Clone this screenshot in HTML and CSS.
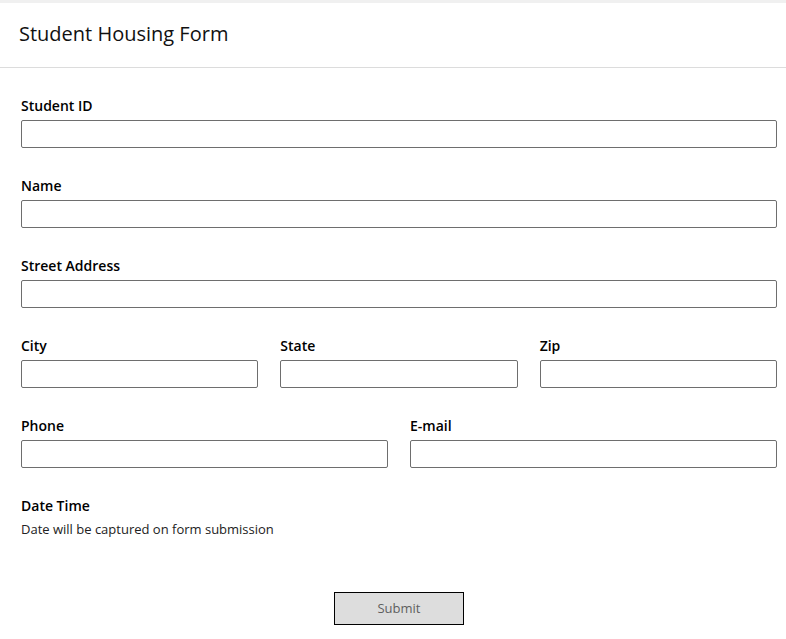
FILE: index.html
```html
<!DOCTYPE html>
<html lang="en">
<head>
  <meta charset="UTF-8">
  <title>Student Housing Form</title>
  <link rel="stylesheet" href="styles.css">
</head>
<body>

<div class="topbar"></div>

<!-- Form header -->
<div class="form-header">
  <h1>Student Housing Form</h1>
</div>

<!-- Form body -->
<form class="housing-form">
  <div class="field">
    <label for="studentId">Student ID</label>
    <input type="text" id="studentId">
  </div>

  <div class="field">
    <label for="name">Name</label>
    <input type="text" id="name">
  </div>

  <div class="field">
    <label for="street">Street Address</label>
    <input type="text" id="street">
  </div>

  <div class="row three">
    <div class="field">
      <label for="city">City</label>
      <input type="text" id="city">
    </div>
    <div class="field">
      <label for="state">State</label>
      <input type="text" id="state">
    </div>
    <div class="field">
      <label for="zip">Zip</label>
      <input type="text" id="zip">
    </div>
  </div>

  <div class="row two">
    <div class="field">
      <label for="phone">Phone</label>
      <input type="text" id="phone">
    </div>
    <div class="field">
      <label for="email">E-mail</label>
      <input type="text" id="email">
    </div>
  </div>

  <div class="field">
    <label>Date Time</label>
    <p class="note">Date will be captured on form submission</p>
  </div>

  <div class="actions">
    <button type="button" class="submit-btn">Submit</button>
  </div>
</form>

</body>
</html>
```

FILE: styles.css
```css
body {
  margin: 0;
  font-family: "Open Sans", "Liberation Sans", sans-serif;
  color: #000;
  background: #fff;
}

.topbar {
  height: 3px;
  background-color: #f0f0f0;
}

/* Header */
.form-header {
  height: 65px;
  box-sizing: border-box;
  border-bottom: 1px solid #dcdcdc;
  display: flex;
  align-items: center;
  padding: 0 0 4px 19px;
}

.form-header h1 {
  margin: 0;
  font-size: 20px;
  font-weight: 400;
  color: #111;
}

/* Form */
.housing-form {
  padding: 28px 9px 20px 21px;
  display: flex;
  flex-direction: column;
  gap: 28px;
}

.field {
  display: flex;
  flex-direction: column;
  min-width: 0;
}

.field label {
  font-size: 14px;
  font-weight: 600;
  line-height: 19px;
  margin-bottom: 5px;
}

.field input {
  height: 28px;
  box-sizing: border-box;
  border: 1px solid #6e6e6e;
  border-radius: 2px;
  padding: 0 6px;
  font-family: inherit;
  font-size: 13px;
  width: 100%;
}

.row {
  display: grid;
  column-gap: 22px;
}

.row.three {
  grid-template-columns: 1fr 1fr 1fr;
}

.row.two {
  grid-template-columns: 1fr 1fr;
}

.note {
  margin: 0;
  font-size: 13px;
  line-height: 18px;
  color: #222;
}

.actions {
  display: flex;
  justify-content: center;
  padding-top: 26px;
}

.submit-btn {
  width: 130px;
  height: 33px;
  padding: 0 0 2px;
  background-color: #dddddd;
  border: 1px solid #000;
  border-radius: 0;
  font-family: inherit;
  font-size: 13px;
  color: #5f5f5f;
}
```
